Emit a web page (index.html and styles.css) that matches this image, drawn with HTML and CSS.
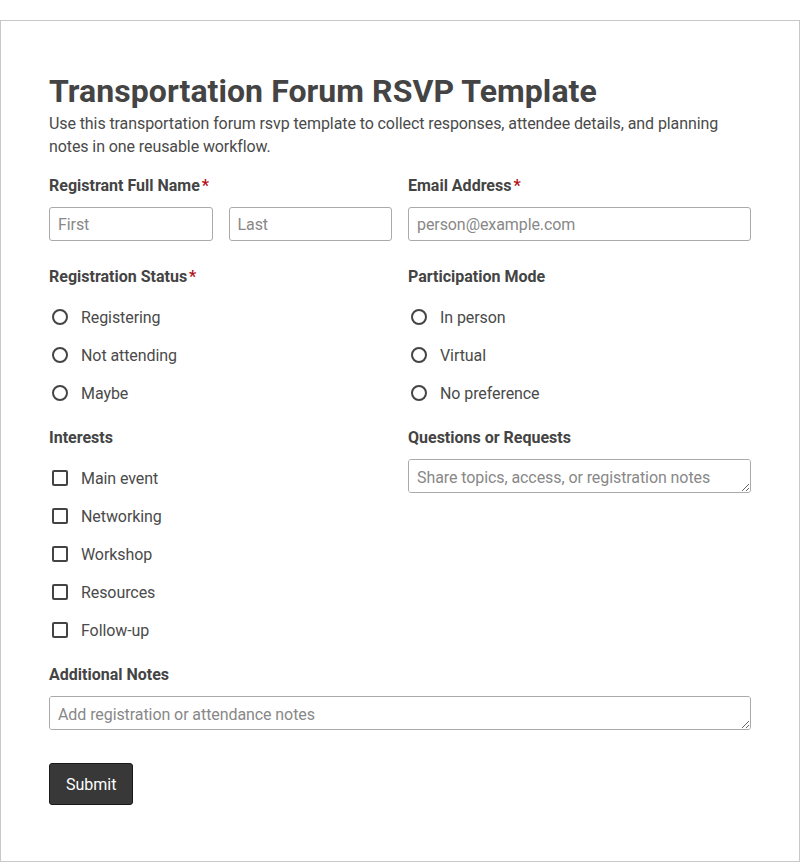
FILE: index.html
```html
<!DOCTYPE html>
<html>
<head>
  <title>Transportation Forum RSVP Template</title>
  <link rel="stylesheet" href="styles.css">
</head>
<body>
<div class="card">
  <h1>Transportation Forum RSVP Template</h1>
  <p class="intro">Use this transportation forum rsvp template to collect responses, attendee details, and planning notes in one reusable workflow.</p>
  <form id="rsvp">
    <div class="grid">
      <div class="field text-field">
        <label>Registrant Full Name<span class="req">*</span></label>
        <div class="pair">
          <input type="text" placeholder="First">
          <input type="text" placeholder="Last">
        </div>
      </div>
      <div class="field text-field">
        <label>Email Address<span class="req">*</span></label>
        <input type="email" placeholder="person@example.com">
      </div>

      <div class="field">
        <label>Registration Status<span class="req">*</span></label>
        <div class="option"><input type="radio" name="status"><span>Registering</span></div>
        <div class="option"><input type="radio" name="status"><span>Not attending</span></div>
        <div class="option"><input type="radio" name="status"><span>Maybe</span></div>
      </div>
      <div class="field">
        <label>Participation Mode</label>
        <div class="option"><input type="radio" name="mode"><span>In person</span></div>
        <div class="option"><input type="radio" name="mode"><span>Virtual</span></div>
        <div class="option"><input type="radio" name="mode"><span>No preference</span></div>
      </div>

      <div class="field">
        <label>Interests</label>
        <div class="option"><input type="checkbox"><span>Main event</span></div>
        <div class="option"><input type="checkbox"><span>Networking</span></div>
        <div class="option"><input type="checkbox"><span>Workshop</span></div>
        <div class="option"><input type="checkbox"><span>Resources</span></div>
        <div class="option"><input type="checkbox"><span>Follow-up</span></div>
      </div>
      <div class="field">
        <label>Questions or Requests</label>
        <textarea rows="1" placeholder="Share topics, access, or registration notes"></textarea>
      </div>
    </div>

    <div class="field wide">
      <label>Additional Notes</label>
      <textarea rows="1" placeholder="Add registration or attendance notes"></textarea>
    </div>

    <button class="submit" type="submit">Submit</button>
  </form>
</div>
</body>
</html>
```

FILE: styles.css
```css
html, body {
  margin: 0;
  padding: 0;
  background: #fff;
  font-family: Roboto, "Liberation Sans", Arial, sans-serif;
  color: #444;
}
.card {
  margin-top: 20px;
  border: 1px solid #c8c8c8;
  padding: 51px 48px 56px;
}
h1 {
  margin: 0 0 2px;
  font-size: 32px;
  line-height: 1.2;
  font-weight: 700;
  letter-spacing: 0.06px;
  color: #444;
}
.intro {
  margin: 0 0 16px;
  font-size: 16px;
  line-height: 23px;
  letter-spacing: -0.09px;
  color: #4a4a4a;
}
.grid {
  display: grid;
  grid-template-columns: 1fr 1fr;
  column-gap: 16px;
}
.field {
  display: flex;
  flex-direction: column;
  margin-bottom: 14px;
}
.text-field {
  margin-bottom: 24px;
}
label {
  font-weight: 700;
  font-size: 16px;
  line-height: 23px;
  margin-bottom: 10px;
}
.req {
  color: #b3131b;
  margin-left: 2px;
}
.pair {
  display: flex;
  gap: 16px;
}
input[type=text], input[type=email], textarea {
  box-sizing: border-box;
  width: 100%;
  height: 34px;
  padding: 6px 8px;
  border: 1px solid #aaa;
  border-radius: 3px;
  font-family: inherit;
  font-size: 16px;
  line-height: 20px;
  letter-spacing: -0.08px;
  color: #444;
  background: #fff;
  margin: 0;
}
textarea {
  display: block;
  padding-top: 8px;
  resize: vertical;
}
::placeholder {
  color: #888;
}
.option {
  display: flex;
  align-items: center;
  height: 38px;
  font-size: 16px;
  letter-spacing: -0.08px;
  color: #4a4a4a;
}
.option input {
  appearance: none;
  box-sizing: border-box;
  width: 16px;
  height: 16px;
  margin: 0 13px 0 3px;
  border: 2px solid #444;
  background: #fff;
}
.option input[type=radio] {
  border-radius: 50%;
}
.option input[type=checkbox] {
  border-radius: 2px;
}
.wide {
  margin-bottom: 0;
}
.submit {
  margin-top: 33px;
  height: 42px;
  padding: 0 16px;
  font-family: inherit;
  font-size: 16px;
  color: #fff;
  background: #383838;
  border: 1px solid #1a1a1a;
  border-radius: 3px;
  cursor: pointer;
}
```
